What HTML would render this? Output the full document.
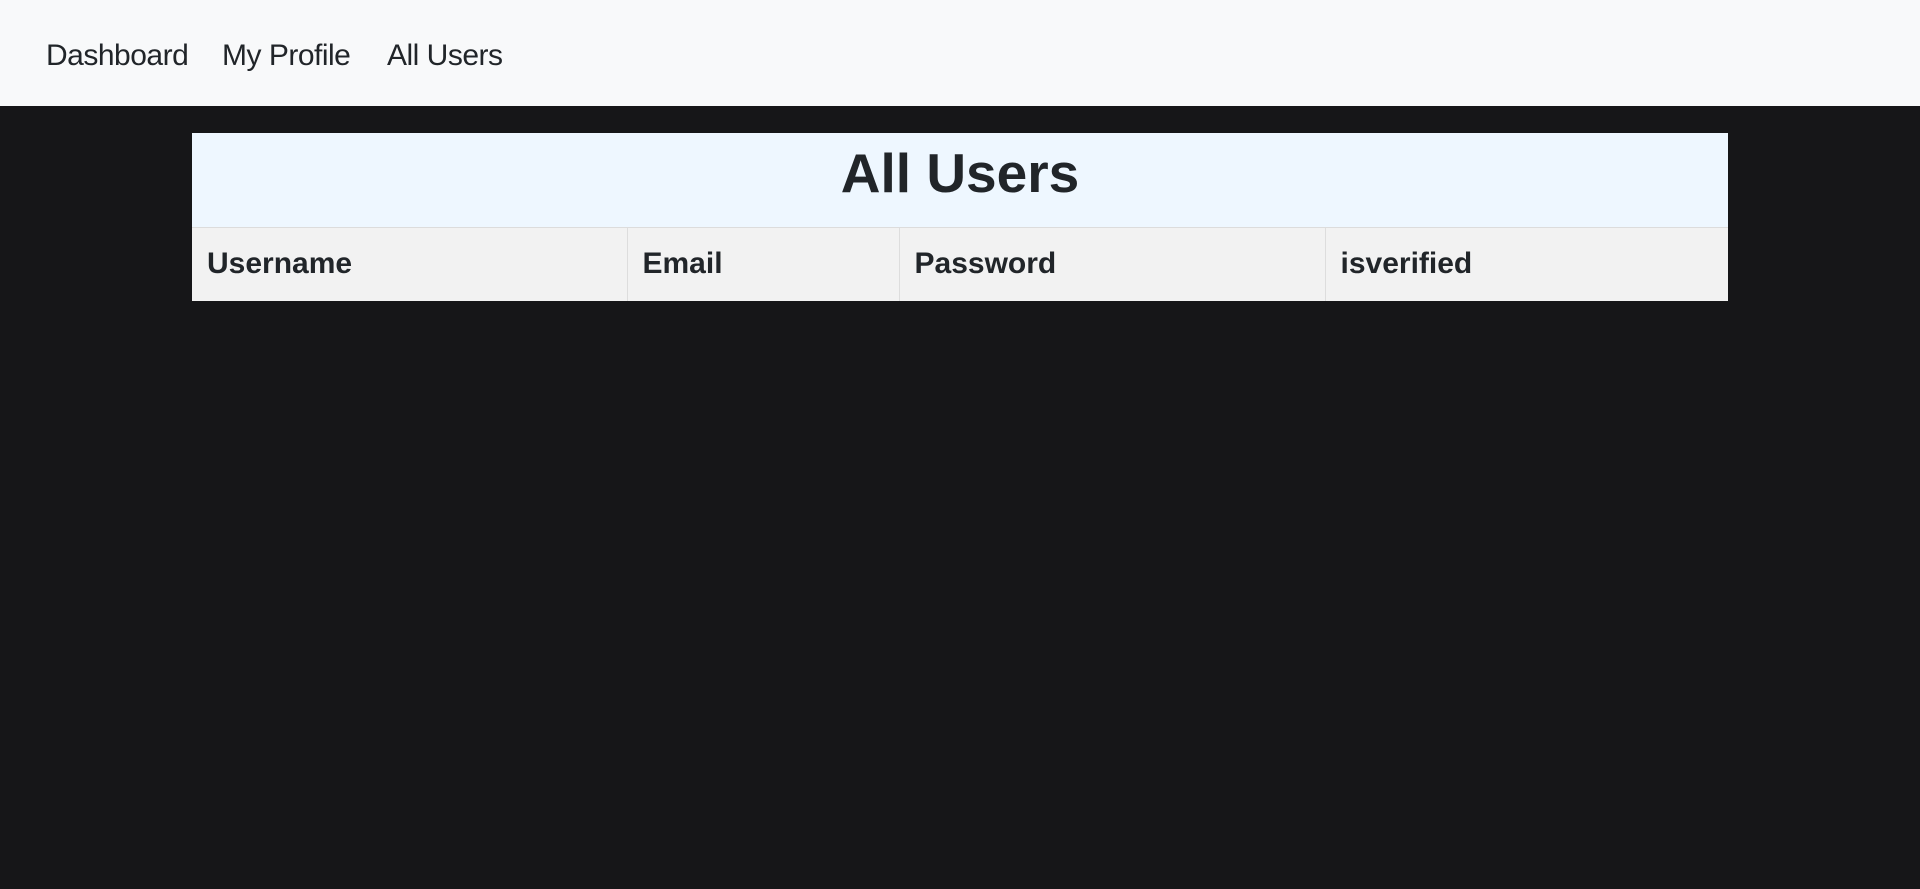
<!DOCTYPE html>
<html><head><style>
body{margin:0;background:#161618;font-family:"Liberation Sans",sans-serif;width:1920px;height:889px;overflow:hidden}
nav{height:106px;background:#f8f9fa;position:relative}
nav a{position:absolute;top:39px;font-size:30px;color:#212529;text-decoration:none;letter-spacing:-0.5px}
table{position:absolute;left:192px;top:133px;width:1536px;border-collapse:collapse}
.t{height:94px;background:#eef7ff;text-align:center;font-size:55px;font-weight:bold;color:#212529;border-bottom:1px solid #dcdcdc;padding:0 0 14px 0;box-sizing:border-box}
th{height:74px;background:#f2f2f2;text-align:left;padding:0 0 0 15px;font-size:30px;color:#212529;border-left:1px solid #ddd;box-sizing:border-box}
th:first-child{border-left:none}
</style></head><body>
<nav><a style="left:46px">Dashboard</a><a style="left:222px">My Profile</a><a style="left:387px">All Users</a></nav>
<table>
<tr><td colspan="4" class="t">All Users</td></tr>
<tr><th style="width:435px">Username</th><th style="width:272px">Email</th><th style="width:426px">Password</th><th>isverified</th></tr>
</table>
</body></html>
